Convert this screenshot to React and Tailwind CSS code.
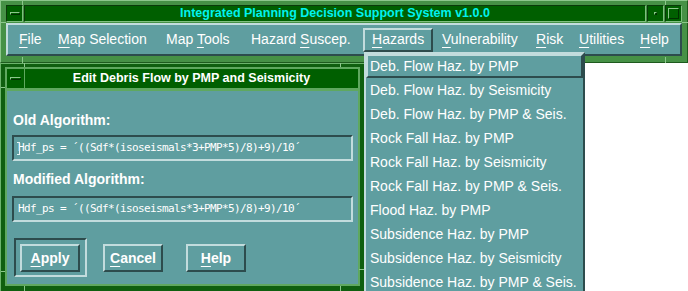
import React from "react";

const font = { fontFamily: '"Liberation Sans", Arial, sans-serif' };

function U({ children }) {
  return <span className="underline decoration-1 underline-offset-[3px]">{children}</span>;
}

function MenuItem({ w, raised, children }) {
  return (
    <div
      className={
        "h-[24px] flex items-center shrink-0 whitespace-pre " +
        w +
        (raised
          ? " border-2 border-t-[#c2dcdd] border-l-[#c2dcdd] border-b-[#2d4c4d] border-r-[#2d4c4d] pl-[7px]"
          : " pl-[9px]")
      }
    >
      <span>{children}</span>
    </div>
  );
}

function Btn({ children, className = "" }) {
  return (
    <div
      className={
        "w-[60px] h-[28px] flex items-center justify-center border-2 border-t-[#c2dcdd] border-l-[#c2dcdd] border-b-[#2d4c4d] border-r-[#2d4c4d] font-bold text-[14px] text-white " +
        className
      }
    >
      <span>{children}</span>
    </div>
  );
}

function Field({ caret }) {
  return (
    <div className="relative ml-[5px] w-[341px] h-[26px] border-2 border-t-[#2d4c4d] border-l-[#2d4c4d] border-b-[#c2dcdd] border-r-[#c2dcdd] flex items-center pl-[4px]">
      {caret && (
        <span className="absolute left-[3px] top-[5px] w-[3px] h-[13px] border-r border-t border-b border-[#e8f4f4]"></span>
      )}
      <span
        className="text-[11px] tracking-[-0.62px] text-white whitespace-pre"
        style={{ fontFamily: '"DejaVu Sans Mono", "Liberation Mono", monospace' }}
      >
        Hdf_ps = ´((Sdf*(isoseismals*3+PMP*5)/8)+9)/10´
      </span>
    </div>
  );
}

export default function App() {
  const items = [
    "Deb. Flow Haz. by PMP",
    "Deb. Flow Haz. by Seismicity",
    "Deb. Flow Haz. by PMP & Seis.",
    "Rock Fall Haz. by PMP",
    "Rock Fall Haz. by Seismicity",
    "Rock Fall Haz. by PMP & Seis.",
    "Flood Haz. by PMP",
    "Subsidence Haz. by PMP",
    "Subsidence Haz. by Seismicity",
    "Subsidence Haz. by PMP & Seis.",
  ];
  return (
    <div className="relative w-[688px] h-[291px] bg-white overflow-hidden" style={font}>
      {/* Main window */}
      <div className="relative h-[63px] w-[688px] bg-[#469146] border border-t-[#8cc78c] border-l-[#8cc78c] border-b-[#1d5a1d] border-r-[#1d5a1d] px-[5px] pt-[4px] flex flex-col">
        <div className="flex h-[17px] gap-[1px]">
          <div className="w-[17px] bg-[#005f00] flex items-center justify-center border border-t-[#0a3a0a] border-l-[#0a3a0a] border-b-[#7fbf7f] border-r-[#7fbf7f]">
            <div className="w-[10px] h-[3px] border border-t-[#8cc78c] border-l-[#8cc78c] border-b-[#003000] border-r-[#003000]"></div>
          </div>
          <div className="flex-1 bg-[#005f00] flex items-center justify-center text-[#00f2ee] font-bold text-[12.5px] border border-t-[#0a3a0a] border-l-[#0a3a0a] border-b-[#7fbf7f] border-r-[#7fbf7f]">
            Integrated Planning Decision Support System v1.0.0
          </div>
          <div className="w-[17px] bg-[#005f00] flex items-center justify-center border border-t-[#0a3a0a] border-l-[#0a3a0a] border-b-[#7fbf7f] border-r-[#7fbf7f]">
            <div className="w-[3px] h-[3px] border border-t-[#8cc78c] border-l-[#8cc78c] border-b-[#003000] border-r-[#003000]"></div>
          </div>
          <div className="w-[17px] bg-[#005f00] flex items-center justify-center border border-t-[#0a3a0a] border-l-[#0a3a0a] border-b-[#7fbf7f] border-r-[#7fbf7f]">
            <div className="w-[11px] h-[11px] border border-t-[#8cc78c] border-l-[#8cc78c] border-b-[#003000] border-r-[#003000]"></div>
          </div>
        </div>
        <div className="mt-[1px] h-[33px] bg-[#5f9ea0] border-2 border-t-[#c2dcdd] border-l-[#c2dcdd] border-b-[#2d4c4d] border-r-[#2d4c4d] flex items-center pl-[2px] text-[14px] text-white">
          <MenuItem w="w-[39px]"><U>F</U>ile</MenuItem>
          <MenuItem w="w-[108px]"><U>M</U>ap Selection</MenuItem>
          <MenuItem w="w-[85px]">Map <U>T</U>ools</MenuItem>
          <MenuItem w="w-[121px]">Hazard <U>S</U>uscep.</MenuItem>
          <MenuItem w="w-[70px]" raised><U>H</U>azards</MenuItem>
          <MenuItem w="w-[94px]"><U>V</U>ulnerability</MenuItem>
          <MenuItem w="w-[43px]"><U>R</U>isk</MenuItem>
          <MenuItem w="w-[61px]"><U>U</U>tilities</MenuItem>
          <MenuItem w="w-[45px]"><U>H</U>elp</MenuItem>
        </div>
        {/* frame notches */}
        <span className="absolute left-[21px] top-[-1px] w-px h-[5px] bg-[#8cc78c]"></span>
        <span className="absolute right-[21px] top-[-1px] w-px h-[5px] bg-[#8cc78c]"></span>
        <span className="absolute left-[21px] bottom-[-1px] w-px h-[6px] bg-[#8cc78c]"></span>
        <span className="absolute right-[21px] bottom-[-1px] w-px h-[6px] bg-[#8cc78c]"></span>
        <span className="absolute left-[-1px] top-[21px] w-[6px] h-px bg-[#8cc78c]"></span>
        <span className="absolute right-[-1px] top-[21px] w-[6px] h-px bg-[#8cc78c]"></span>
      </div>

      {/* Dialog */}
      <div className="relative w-[364px] h-[228px] bg-[#0f5f0f] border-t border-l border-t-[#6cb46c] border-l-[#6cb46c] px-[4px] pt-[3px] pb-[5px]">
        <div className="bg-[#5fa85f] p-[2px] flex flex-col gap-[3px]">
          <div className="flex h-[19px] gap-[1px]">
            <div className="w-[17px] bg-[#005f00] flex items-center justify-center">
              <div className="w-[11px] h-[3px] border border-t-[#8cc78c] border-l-[#8cc78c] border-b-[#003000] border-r-[#003000]"></div>
            </div>
            <div className="flex-1 bg-[#005f00] flex items-center justify-center text-white font-bold text-[12.5px]">
              Edit Debris Flow by PMP and Seismicity
            </div>
          </div>
          <div className="h-[193px] bg-[#5f9ea0] flex flex-col text-white">
            <div className="mt-[21px] ml-[6px] font-bold text-[14px] leading-[16px]">Old Algorithm:</div>
            <div className="mt-[7px]"><Field caret /></div>
            <div className="mt-[10px] ml-[6px] font-bold text-[14px] leading-[16px]">Modified Algorithm:</div>
            <div className="mt-[9px]"><Field /></div>
            <div className="mt-[16px] flex items-start">
              <div className="ml-[7px] w-[73px] h-[39px] border-2 border-t-[#2d4c4d] border-l-[#2d4c4d] border-b-[#c2dcdd] border-r-[#c2dcdd] pl-[4px] pt-[4px]">
                <Btn><U>A</U>pply</Btn>
              </div>
              <Btn className="ml-[16px] mt-[6px]"><U>C</U>ancel</Btn>
              <Btn className="ml-[23px] mt-[6px]"><U>H</U>elp</Btn>
            </div>
          </div>
        </div>
        <span className="absolute left-[23px] top-[-1px] w-px h-[4px] bg-[#8cc78c]"></span>
        <span className="absolute left-[339px] top-[-1px] w-px h-[4px] bg-[#8cc78c]"></span>
        <span className="absolute left-[23px] bottom-0 w-px h-[5px] bg-[#8cc78c]"></span>
        <span className="absolute left-[339px] bottom-0 w-px h-[5px] bg-[#8cc78c]"></span>
        <span className="absolute left-0 top-[23px] w-[4px] h-px bg-[#8cc78c]"></span>
        <span className="absolute left-0 top-[207px] w-[4px] h-px bg-[#8cc78c]"></span>
        <span className="absolute right-0 top-[205px] w-[5px] h-px bg-[#8cc78c]"></span>
      </div>

      {/* Dropdown menu */}
      <div className="absolute left-[364px] top-[52px] w-[221px] bg-[#5f9ea0] border-2 border-t-[#c2dcdd] border-l-[#c2dcdd] border-b-[#2d4c4d] border-r-[#2d4c4d] text-white text-[14px]">
        {items.map((t, i) =>
          i === 0 ? (
            <div
              key={t}
              className="h-[24px] flex items-center pl-[2px] border-2 border-t-[#c2dcdd] border-l-[#c2dcdd] border-b-[#2d4c4d] border-r-[#2d4c4d] whitespace-nowrap"
            >
              {t}
            </div>
          ) : (
            <div key={t} className="h-[24px] flex items-center pl-[4px] whitespace-nowrap">
              {t}
            </div>
          )
        )}
      </div>
    </div>
  );
}
